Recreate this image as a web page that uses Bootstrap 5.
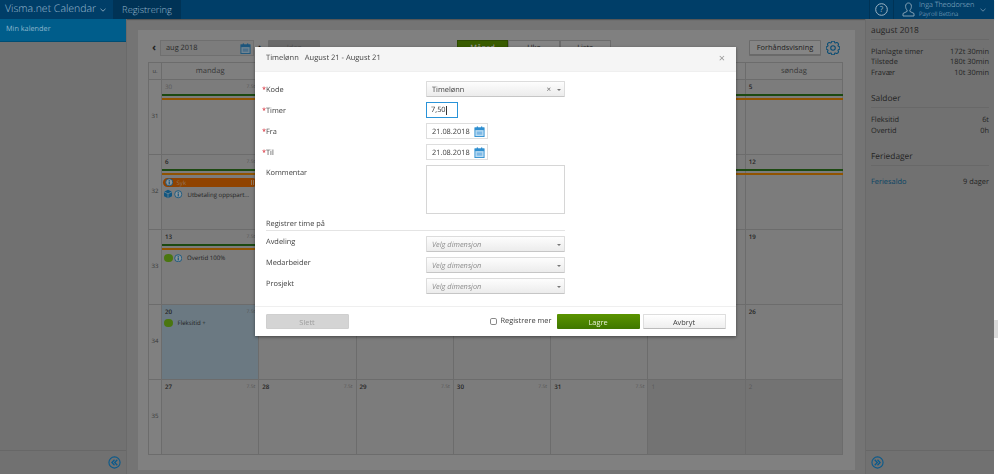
<!DOCTYPE html>
<html lang="no">
<head>
<meta charset="utf-8">
<title>Visma.net Calendar</title>
<link href="https://cdn.jsdelivr.net/npm/bootstrap@5.3.0/dist/css/bootstrap.min.css" rel="stylesheet">
<style>
html,body{height:474px;overflow:hidden}
body{font-family:"Open Sans",sans-serif;font-size:7.4px;line-height:1.25;color:#2a2a2a;background:#fff;display:flex;text-rendering:geometricPrecision}
.app-root{width:994px;height:474px;background:#747474;display:flex;flex-direction:column;flex:none}
.scroll-rail{flex:1;padding-top:320px}
.scroll-thumb{height:18px;background:#dcdcdc}
.top-bar{height:19px;background:#003e68;color:#9dbcd1;flex:none;box-shadow:0 1px 1px rgba(0,0,0,.25)}
.brand-name{width:113px;padding-left:5px;font-size:10.5px;font-weight:300;white-space:nowrap}
.brand-tab{width:68px;background:#003356;font-size:9.3px;font-weight:300;text-align:center;line-height:19px}
.help-box{width:25px;border-left:1px solid #003356;border-right:1px solid #003356;margin-right:8px}
.user-box{width:54px;margin-left:4px;white-space:nowrap}
.user-name{font-size:7.3px;line-height:10px;font-weight:300}
.user-org{font-size:6.1px;line-height:8px;font-weight:300}
.user-caret{margin:0 8px 0 7px}
.work-area{flex:1;min-height:0}
.left-pane{width:127px;background:#717171;border-right:1px solid #6a6a6a;flex:none}
.pane-active{height:22px;background:#005d8b;color:#8cb6cb;padding:0 6px;line-height:21px;font-size:7.3px;box-shadow:0 1px 0 #004d73}
.pane-foot{height:24px;border-top:1px solid #676767;padding:0 5px}
.centre-panel{width:717px;height:440px;margin:11px 10px 0 11px;background:#808080;padding:10px;flex:none}
.tool-row{height:16px;margin-bottom:6px}
.nav-arrow{width:12px;text-align:center;font-size:11px;line-height:14px;font-weight:700;color:#1f1f1f}
.date-pick{width:94px;height:15.5px;border:1px solid #6f6f6f;background:#7c7c7c;padding:0 2px 0 5px;font-size:7.4px;line-height:14px;color:#2a2a2a;--cal-light:#718491;--cal-mid:#4b6f8a;--cal-line:#1c567d}
.today-btn{width:52px;height:16px;margin-left:2px;background:#6a6a6a;color:#535353;border-radius:1px;font-size:7.4px;line-height:16px;text-align:center}
.view-group{margin-left:137px;width:154px}
.view-btn{width:51.3px;height:16px;border:1px solid #6c6c6c;background:#848484;font-size:7.4px;line-height:14px;text-align:center;color:#1f1f1f}
.view-on{background:#395c00;border-color:#2e4b00;color:#999;font-weight:600}
.preview-btn{width:72px;height:16px;margin-left:138px;padding:0;border:1px solid #6a6a6a;border-bottom-width:2px;background:#858585;border-radius:1px;font-size:7.4px;line-height:13px;color:#1f1f1f}
.gear-icon{margin-left:5px;color:#064b74}
.month-grid{width:695px;display:grid;grid-template-columns:13px repeat(7,1fr);grid-template-rows:17px repeat(5,75px);border:1px solid #6c6c6c;border-width:1px 0 0 1px;height:393px}
.grid-head,.grid-week,.grid-day{border-right:1px solid #6c6c6c;border-bottom:1px solid #6c6c6c;min-width:0}
.grid-head{text-align:center;font-size:7.6px;line-height:16px;color:#373737;background:#7f7f7f}
.head-week{font-size:5.8px}
.grid-week{font-size:6px;color:#363636;display:flex;align-items:center;justify-content:center}
.grid-day{background:#7c7c7c;position:relative;padding-top:14px}
.day-num{position:absolute;left:3px;top:2px;font-size:6.2px;font-weight:600;color:#232323;line-height:9px}
.day-hrs{position:absolute;right:3px;top:3px;font-size:5px;color:#555;line-height:8px}
.day-off{background:#737373}
.day-off .day-num,.day-dim .day-num{color:#595959;font-weight:400}
.day-pick{background:#6b7982;padding-top:13px}
.flag-green{height:2.4px;background:#1c4911;margin:0 -1px 1.6px 0}
.flag-orange{height:2.4px;background:#905400;margin:0 -1px 2.5px 0}
.day-event{display:flex;align-items:center;height:10px;padding-left:1px;font-size:6.1px;white-space:nowrap;color:#1f1f1f;gap:1px}
.event-pill{background:#904300;color:#92775e;border-radius:5px;height:9.5px;margin:0 1px 2px 1px;padding:0 3px 0 2px;gap:3px}
.pill-mark{width:3px;height:5px;border:solid #92775e;border-width:0 1px;margin-left:auto}
.green-dot{width:8.5px;height:8.5px;border-radius:50%;background:#4a760f;margin-left:1px;flex:none}
.side-pane{flex:1;background:#717171;border-left:1px solid #6a6a6a;display:flex;flex-direction:column;justify-content:space-between;min-width:0}
.side-body{padding:5px 5px 0 5px;font-size:7.4px;line-height:10.4px;color:#242424}
.side-title{font-size:8.4px;line-height:13px;padding-bottom:2px;border-bottom:1px solid #686868;margin-bottom:7px;color:#242424}
.side-block{margin-bottom:14px}
.side-link{color:#084364;text-decoration:none}
.sheet-wrap{overflow:hidden;width:994px}
.sheet-dialog{width:481px;max-width:none;margin:47px 0 0 255px}
.sheet-box{height:289px;border:0;border-radius:0;background:#fff;font-size:7.4px;color:#3f3f3f;box-shadow:0 1px 3px rgba(0,0,0,.45);--cal-light:#bcdcf2;--cal-mid:#7db9e6;--cal-line:#2f8fd0}
.sheet-head{height:25px;padding:0 11px;background:#f5f5f5;border-bottom:1px solid #efefef;border-radius:0;font-size:7.5px}
.sheet-head .sheet-sub{margin-left:6px}
.sheet-close{font-size:11px;color:#9a9a9a;line-height:12px}
.sheet-body{padding:9px 7px 0;flex:none;height:234px}
.field-row{display:flex;margin-bottom:5px;height:16px}
.field-label{width:164px;padding-top:4px;padding-left:4px;flex:none;line-height:11px;position:relative}
.req-mark{position:absolute;left:0;top:4px;color:#d5232f}
.pick-box{height:16px;border:1px solid #dcdcdc;border-bottom:1px solid #c6c6c6;background:linear-gradient(#fdfdfd,#ececec);border-radius:1px;padding:1px 3px 0 5px;font-size:7.4px;line-height:14px;color:#3f3f3f}
.pick-code{width:139px}
.pick-dim{width:139px;font-style:italic;color:#8d8d8d}
.pick-x{font-size:8px;color:#666;margin-right:6px;font-style:normal}
.pick-caret{width:0;height:0;border:2px solid transparent;border-top:2.5px solid #777;border-bottom:0}
.hours-input{width:32px;height:16px;border:1.5px solid #2a93d8;padding:0 4px;font-size:7.4px;line-height:13px;border-radius:0;color:#333;min-height:0;box-shadow:none;display:flex;align-items:center}
.text-caret{width:1px;height:9px;background:#333}
.date-input{width:62px;height:16px;border:1px solid #dedede;padding:1px 2px 0 5px;font-size:7.4px;line-height:14px;color:#3f3f3f}
.note-area{width:139px;height:49px;border:1px solid #d6d6d6;border-radius:0;padding:2px;min-height:0;resize:none;box-shadow:none}
.note-row{height:49px}
.note-row .field-label{padding-top:3px}
.group-title{width:299px;margin:-0.5px 0 5px 4px;height:12.5px;border-bottom:1px solid #e4e4e4;line-height:11px}
.dim-row .field-label{padding-top:1px}
.sheet-foot{height:30px;flex:none;padding:0 10.5px;border-top:1px solid #efefef;border-radius:0;flex-wrap:nowrap;justify-content:flex-start}
.sheet-foot>*{margin:0}
.foot-btn{width:83px;height:15.5px;padding:0;font-size:7.4px;line-height:14px;border-radius:1px;border:0}
.btn.btn-slett,.btn.btn-slett:disabled{background:#d4d4d4;color:#9d9d9d;opacity:1;border:1px solid #cfcfcf}
.btn.btn-lagre{background:linear-gradient(#5b9400,#3f7700);color:#e8f2d8;margin-left:6px;border:0}
.btn.btn-avbryt{background:linear-gradient(#fff,#eee);color:#3f3f3f;border:1px solid #dedede;border-bottom:1px solid #bbb;margin-left:3px}
.more-check{width:7.5px;height:7.5px;margin:0 3.5px 0 0;border:1px solid #888;border-radius:1px;float:none;background:#fff}
.more-label{width:50px;font-size:7.4px;white-space:nowrap}
.foot-gap{flex:1}
.cal-sheet{fill:var(--cal-light);stroke:var(--cal-line)}
.cal-ink{fill:var(--cal-line)}
.cal-cell{fill:var(--cal-mid)}
</style>
</head>
<body>
<svg width="0" height="0" class="position-absolute">
<defs>
<symbol id="cal" viewBox="0 0 12 12"><rect class="cal-sheet" x="1" y="2" width="10" height="9.500"/><rect class="cal-ink" x="1" y="2" width="10" height="2.500"/><rect class="cal-ink" x="3" y=".5" width="1.400" height="2.500"/><rect class="cal-ink" x="7.600" y=".5" width="1.400" height="2.500"/><rect class="cal-cell" x="3" y="6" width="6" height="3.500"/></symbol>
<symbol id="inf" viewBox="0 0 10 10"><circle cx="5" cy="5" r="4.200" fill="#8c9397" stroke="#125680" stroke-width="1"/><rect x="4.300" y="4" width="1.400" height="3.600" fill="#125680"/><rect x="4.300" y="2.200" width="1.400" height="1.200" fill="#125680"/></symbol>
<symbol id="dbl" viewBox="0 0 14 14"><circle cx="7" cy="7" r="6" fill="none" stroke="#0a5a8c" stroke-width="1.200"/><path d="M7 4 4.200 7 7 10M10 4 7.200 7 10 10" fill="none" stroke="#0a5a8c" stroke-width="1.400"/></symbol>
</defs>
</svg>
<div class="app-root">
  <header class="top-bar d-flex">
    <div class="brand-name d-flex align-items-center">Visma.net Calendar
      <svg class="ms-1" width="6" height="4" viewBox="0 0 6 4"><path d="M.5.8 3 3.200 5.500.8" fill="none" stroke="#7fa0b6"/></svg></div>
    <div class="brand-tab">Registrering</div>
    <div class="flex-grow-1"></div>
    <div class="help-box d-flex align-items-center justify-content-center">
      <svg width="13" height="13" viewBox="0 0 13 13"><circle cx="6.500" cy="6.500" r="5.800" fill="none" stroke="#9db5c5"/><text x="6.500" y="9.300" text-anchor="middle" font-size="8" fill="#9db5c5" font-family="Open Sans">?</text></svg>
    </div>
    <svg class="align-self-center" width="13" height="15" viewBox="0 0 13 15"><path d="M6.500 1C4.600 1 3.600 2.400 3.600 4.300c0 1.600.6 3 1.500 3.700v1.400L1 11.500v2.500h11v-2.500L7.900 9.400V8c.9-.7 1.500-2.100 1.500-3.700C9.400 2.400 8.400 1 6.500 1z" fill="none" stroke="#8fa9ba" stroke-width=".9"/></svg>
    <div class="user-box"><div class="user-name">Inga Theodorsen</div><div class="user-org">Payroll Bettina</div></div>
    <svg class="align-self-center user-caret" width="6" height="4" viewBox="0 0 6 4"><path d="M.5.8 3 3.200 5.500.8" fill="none" stroke="#5f88a4"/></svg>
  </header>
  <div class="work-area d-flex">
    <nav class="left-pane d-flex flex-column">
      <div class="pane-active">Min kalender</div>
      <div class="flex-grow-1"></div>
      <div class="pane-foot d-flex align-items-center justify-content-end"><svg width="13" height="13"><use href="#dbl"/></svg></div>
    </nav>
    <main class="centre-panel">
      <div class="tool-row d-flex align-items-center">
        <span class="nav-arrow">‹</span>
        <div class="date-pick d-flex justify-content-between align-items-center"><span>aug 2018</span><svg width="11" height="11"><use href="#cal"/></svg></div>
        <span class="nav-arrow">›</span>
        <div class="today-btn">Idag</div>
        <div class="view-group d-flex"><div class="view-btn view-on">Måned</div><div class="view-btn">Uke</div><div class="view-btn">Liste</div></div>
        <button type="button" class="btn preview-btn">Forhåndsvisning</button>
        <svg class="gear-icon" width="14" height="14" viewBox="0 0 16 16"><path d="M9.796 1.343c-.527-1.790-3.065-1.790-3.592 0l-.094.319a.873.873 0 0 1-1.255.52l-.292-.16c-1.640-.892-3.433.902-2.540 2.541l.159.292a.873.873 0 0 1-.52 1.255l-.319.094c-1.790.527-1.790 3.065 0 3.592l.319.094a.873.873 0 0 1 .52 1.255l-.16.292c-.892 1.640.901 3.434 2.541 2.540l.292-.159a.873.873 0 0 1 1.255.52l.094.319c.527 1.790 3.065 1.790 3.592 0l.094-.319a.873.873 0 0 1 1.255-.52l.292.16c1.640.893 3.434-.902 2.540-2.541l-.159-.292a.873.873 0 0 1 .52-1.255l.319-.094c1.790-.527 1.790-3.065 0-3.592l-.319-.094a.873.873 0 0 1-.52-1.255l.16-.292c.893-1.640-.902-3.433-2.541-2.540l-.292.159a.873.873 0 0 1-1.255-.52z" fill="none" stroke="currentColor" stroke-width="1.200"/><circle cx="8" cy="8" r="2.600" fill="none" stroke="currentColor" stroke-width="1.200"/></svg>
      </div>
      <div class="month-grid" id="grid"></div>
    </main>
    <aside class="side-pane">
      <div class="side-body">
        <div class="side-block"><div class="side-title">august 2018</div>
          <div class="d-flex justify-content-between"><span>Planlagte timer</span><span>172t 30min</span></div>
          <div class="d-flex justify-content-between"><span>Tilstede</span><span>180t 30min</span></div>
          <div class="d-flex justify-content-between"><span>Fravær</span><span>10t 30min</span></div>
        </div>
        <div class="side-block"><div class="side-title">Saldoer</div>
          <div class="d-flex justify-content-between"><span>Fleksitid</span><span>6t</span></div>
          <div class="d-flex justify-content-between"><span>Overtid</span><span>0h</span></div>
        </div>
        <div class="side-block"><div class="side-title">Feriedager</div>
          <div class="d-flex justify-content-between pt-1"><a class="side-link" href="#">Feriesaldo</a><span>9 dager</span></div>
        </div>
      </div>
      <div class="pane-foot d-flex align-items-center"><svg width="13" height="13"><use href="#dbl" transform="matrix(-1 0 0 1 13 0)"/></svg></div>
    </aside>
  </div>
</div>
<div class="scroll-rail"><div class="scroll-thumb"></div></div>

<div class="modal d-block sheet-wrap">
  <div class="modal-dialog sheet-dialog">
    <div class="modal-content sheet-box">
      <div class="modal-header sheet-head d-flex justify-content-between">
        <div><span>Timelønn</span><span class="sheet-sub">August 21 - August 21</span></div>
        <span class="sheet-close">×</span>
      </div>
      <div class="modal-body sheet-body">
        <div class="field-row"><div class="field-label"><span class="req-mark">*</span>Kode</div>
          <div class="pick-box pick-code d-flex align-items-center justify-content-between"><span class="flex-grow-1">Timelønn</span><span class="pick-x">×</span><span class="pick-caret"></span></div></div>
        <div class="field-row"><div class="field-label"><span class="req-mark">*</span>Timer</div>
          <div class="form-control hours-input"><span>7,50</span><span class="text-caret"></span></div></div>
        <div class="field-row"><div class="field-label"><span class="req-mark">*</span>Fra</div>
          <div class="date-input d-flex align-items-center justify-content-between"><span>21.08.2018</span><svg width="11" height="11"><use href="#cal"/></svg></div></div>
        <div class="field-row"><div class="field-label"><span class="req-mark">*</span>Til</div>
          <div class="date-input d-flex align-items-center justify-content-between"><span>21.08.2018</span><svg width="11" height="11"><use href="#cal"/></svg></div></div>
        <div class="field-row note-row"><div class="field-label">Kommentar</div>
          <textarea class="form-control note-area"></textarea></div>
        <div class="group-title">Registrer time på</div>
        <div class="field-row dim-row"><div class="field-label">Avdeling</div>
          <div class="pick-box pick-dim d-flex align-items-center justify-content-between"><span>Velg dimensjon</span><span class="pick-caret"></span></div></div>
        <div class="field-row dim-row"><div class="field-label">Medarbeider</div>
          <div class="pick-box pick-dim d-flex align-items-center justify-content-between"><span>Velg dimensjon</span><span class="pick-caret"></span></div></div>
        <div class="field-row dim-row"><div class="field-label">Prosjekt</div>
          <div class="pick-box pick-dim d-flex align-items-center justify-content-between"><span>Velg dimensjon</span><span class="pick-caret"></span></div></div>
      </div>
      <div class="modal-footer sheet-foot">
        <button type="button" class="btn foot-btn btn-slett" disabled>Slett</button>
        <div class="foot-gap"></div>
        <input class="form-check-input more-check" type="checkbox">
        <span class="more-label">Registrere mer</span>
        <button type="button" class="btn foot-btn btn-lagre">Lagre</button>
        <button type="button" class="btn foot-btn btn-avbryt">Avbryt</button>
      </div>
    </div>
  </div>
</div>
<script>
const names=['mandag','','','','','','søndag'];
const weeks=[[31,[30,31,1,2,3,4,5]],[32,[6,7,8,9,10,11,12]],[33,[13,14,15,16,17,18,19]],[34,[20,21,22,23,24,25,26]],[35,[27,28,29,30,31,1,2]]];
const inf='<svg width="8.500" height="8.500" class="flex-none"><use href="#inf"/></svg>';
let h='<div class="grid-head head-week">u.</div>'+names.map(n=>`<div class="grid-head">${n}</div>`).join('');
weeks.forEach(([w,days],r)=>{
  h+=`<div class="grid-week">${w}</div>`;
  days.forEach((d,c)=>{
    const hidden=r<4&&c>0&&c<6;
    let cls='grid-day';
    if(r===0&&c===0)cls+=' day-dim';
    if(r===4&&c>4)cls+=' day-off';
    if(r===3&&c===0)cls+=' day-pick';
    let inner=hidden?'':`<span class="day-num">${d}</span>`;
    if(c<5&&!hidden)inner+=`<span class="day-hrs">7.5t</span>`;
    if(r<2||(r===2&&c<5))inner+='<div class="flag-green"></div><div class="flag-orange"></div>';
    if(r===1&&c===0)inner+=`<div class="day-event event-pill">${inf}<span>Syk</span><span class="pill-mark"></span></div><div class="day-event"><svg width="10" height="10" viewBox="0 0 10 10"><path d="M5 .8 9 2.800v4.400L5 9.200 1 7.200V2.800z" fill="#125680"/><path d="M1 2.800 5 4.800l4-2M5 4.800v4.400" fill="none" stroke="#7f8e97" stroke-width=".7"/></svg>${inf}<span class="ms-1">Utbetaling oppspart...</span></div>`;
    if(r===2&&c===0)inner+=`<div class="day-event"><span class="green-dot"></span>${inf}<span class="ms-1">Overtid 100%</span></div>`;
    if(r===3&&c===0)inner+=`<div class="day-event"><span class="green-dot"></span><span class="ms-1">Fleksitid +</span></div>`;
    h+=`<div class="${cls}">${inner}</div>`;
  });
});
document.getElementById('grid').innerHTML=h;
</script>
<script src="https://cdn.jsdelivr.net/npm/bootstrap@5.3.0/dist/js/bootstrap.bundle.min.js"></script>
</body>
</html>
